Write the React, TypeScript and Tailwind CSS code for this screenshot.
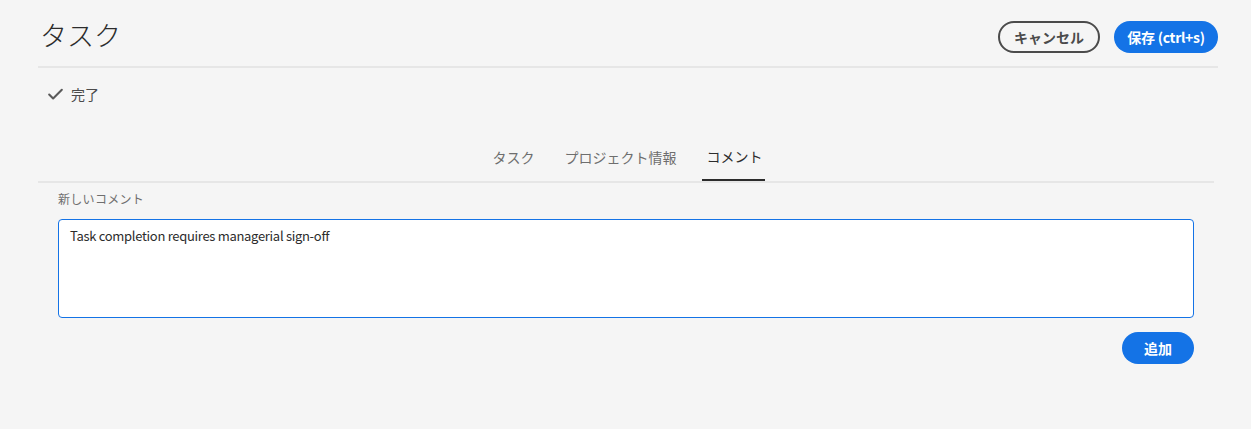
import { Check } from "lucide-react"

const TABS = ["タスク", "プロジェクト情報", "コメント"]

export default function App() {
  return (
    <div className="w-[1251px] h-[429px] bg-[#f5f5f5] text-[#2c2c2c]" style={{ fontFamily: '"Noto Sans CJK JP", "Noto Sans", sans-serif' }}>
      <div className="pl-[38px] pr-[33px]">
        <div className="flex items-center justify-between h-[68px] pt-[6px] border-b-2 border-[#e6e6e6] pl-[2px]">
          <h1 className="text-[27px] font-light leading-none -mt-[4px]">タスク</h1>
          <div className="flex items-center gap-[14px] mt-[2px]">
            <button className="h-[32px] w-[102px] rounded-full border-2 border-[#4b4b4b] text-[14px] font-bold text-[#4b4b4b] leading-none">
              キャンセル
            </button>
            <button className="h-[32px] w-[104px] rounded-full bg-[#1473e6] text-[14px] font-bold text-white leading-none tracking-[-0.3px]">
              保存 (ctrl+s)
            </button>
          </div>
        </div>
        <div className="flex items-center gap-[6px] pl-[8px] h-[52px]">
          <Check size={19} strokeWidth={2.6} className="text-[#5a5a5a]" />
          <span className="text-[14px] text-[#4b4b4b]">完了</span>
        </div>
      </div>

      <div className="pl-[38px] pr-[37px] mt-[13px]">
        <div className="flex justify-center gap-[20px] border-b-2 border-[#e6e6e6]">
          {TABS.map((t, i) => (
            <div key={t} className={`h-[48px] flex items-center px-[5px] text-[14px] ${i === 2 ? "text-[#2c2c2c] border-b-2 border-[#2c2c2c] -mb-[2px] pr-[2px]" : "text-[#6e6e6e]"}`}>
              {t}
            </div>
          ))}
        </div>
        <div className="px-[20px] pt-[7px]">
          <div className="text-[12px] text-[#6e6e6e] tracking-[0.3px] leading-[18px]">新しいコメント</div>
          <div className="mt-[11px] h-[99px] bg-white border border-[#1473e6] rounded-[4px] px-[11px] pt-[6px] text-[13px] tracking-[-0.3px] leading-[20px] text-[#2c2c2c]">
            Task completion requires managerial sign-off
          </div>
          <div className="flex justify-end mt-[14px]">
            <button className="h-[32px] w-[72px] rounded-full bg-[#1473e6] text-[14px] font-bold text-white leading-none">
              追加
            </button>
          </div>
        </div>
      </div>
    </div>
  )
}
